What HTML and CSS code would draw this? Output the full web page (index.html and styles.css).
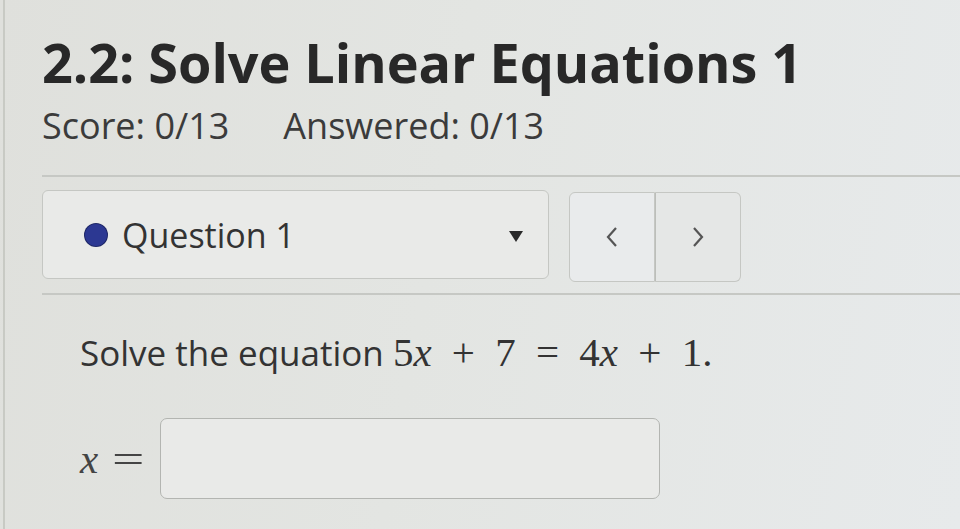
FILE: index.html
```html
<!DOCTYPE html>
<html>
<head>
<meta charset="utf-8">
<link rel="stylesheet" href="styles.css">
</head>
<body>
<div class="page">
  <h1 class="title">2.2: Solve Linear Equations 1</h1>
  <div class="meta">
    <span class="score">Score: 0/13</span>
    <span class="answered">Answered: 0/13</span>
  </div>
  <div class="rule"></div>
  <div class="qrow">
    <div class="select">
      <span class="dot"></span>
      <span class="qlabel">Question 1</span>
      <span class="caret"></span>
    </div>
    <div class="nav">
      <button class="navbtn prev" aria-label="Previous">
        <svg width="14" height="22" viewBox="0 0 14 22"><path d="M11 2 L3 11 L11 20" fill="none" stroke="#555" stroke-width="2.2"/></svg>
      </button>
      <button class="navbtn next" aria-label="Next">
        <svg width="14" height="22" viewBox="0 0 14 22"><path d="M3 2 L11 11 L3 20" fill="none" stroke="#555" stroke-width="2.2"/></svg>
      </button>
    </div>
  </div>
  <div class="rule rule2"></div>
  <div class="question">
    <p class="prompt">Solve the equation <span class="math">5<i>x</i> + 7 = 4<i>x</i> + 1.</span></p>
    <div class="answer">
      <span class="math lhs"><i>x</i> <span class="eq">=</span></span>
      <div class="input"></div>
    </div>
  </div>
</div>
</body>
</html>
```

FILE: styles.css
```css
html, body {
  margin: 0;
  padding: 0;
  height: 100%;
}
body {
  background: linear-gradient(100deg, #dfe0dc 0%, #e3e5e2 45%, #e7eaeb 100%);
  font-family: "Open Sans", "Noto Sans", sans-serif;
  overflow: hidden;
}
.page {
  margin-left: 3px;
  border-left: 2px solid #c8cac4;
  padding-left: 37px;
  height: 100%;
  box-sizing: border-box;
}
.title {
  margin: 0;
  padding-top: 30px;
  font-size: 54px;
  line-height: 64px;
  font-weight: 700;
  color: #282828;
  letter-spacing: -0.05px;
}
.meta {
  margin-top: 10px;
  font-size: 36px;
  line-height: 44px;
  color: #3b3b3b;
  display: flex;
  gap: 54px;
}
.rule {
  margin-top: 27px;
  height: 2px;
  background: #c6c8c4;
}
.rule2 {
  margin-top: 11px;
}
.qrow {
  margin-top: 13px;
  display: flex;
  align-items: flex-start;
  gap: 20px;
}
.select {
  box-sizing: border-box;
  width: 507px;
  height: 89px;
  border: 1.5px solid #c5c7c3;
  border-radius: 6px;
  background: #e9eae8;
  display: flex;
  align-items: center;
  padding-left: 42px;
  padding-right: 25px;
}
.dot {
  width: 22px;
  height: 22px;
  border-radius: 50%;
  background: #2c3892;
  box-shadow: 0 0 0 1px #1e2766;
  flex: none;
}
.qlabel {
  margin-left: 15px;
  font-size: 34px;
  color: #333;
  flex: 1;
}
.caret {
  width: 0;
  height: 0;
  border-left: 7px solid transparent;
  border-right: 7px solid transparent;
  border-top: 11px solid #2a2a2a;
  margin-top: 4px;
}
.nav {
  display: flex;
  margin-top: 2px;
}
.navbtn {
  box-sizing: border-box;
  width: 86px;
  height: 90px;
  border: 1.5px solid #c5c7c3;
  background: #e8eaea;
  display: flex;
  align-items: center;
  justify-content: center;
  padding: 0;
}
.prev {
  border-radius: 6px 0 0 6px;
  background: #e9ebec;
}
.next {
  border-radius: 0 6px 6px 0;
  border-left: 1.5px solid #bcbeba;
  background: #e5e7e6;
}
.question {
  padding-left: 38px;
}
.prompt {
  margin: 35px 0 0 0;
  font-size: 35px;
  line-height: 44px;
  color: #333;
}
.math {
  font-family: "Liberation Serif", "DejaVu Serif", serif;
  font-size: 41px;
  letter-spacing: 0;
  word-spacing: 10px;
  color: #333;
}
.answer {
  margin-top: 43px;
  display: flex;
  align-items: center;
  gap: 10px;
}
.lhs {
  width: 70px;
  color: #444;
  word-spacing: 4px;
}
.eq {
  display: inline-block;
  transform: scaleX(1.4);
  transform-origin: left center;
}
.input {
  box-sizing: border-box;
  width: 500px;
  height: 81px;
  border: 1.5px solid #b3b5b1;
  border-radius: 7px;
  background: #e9eae8;
}
```
